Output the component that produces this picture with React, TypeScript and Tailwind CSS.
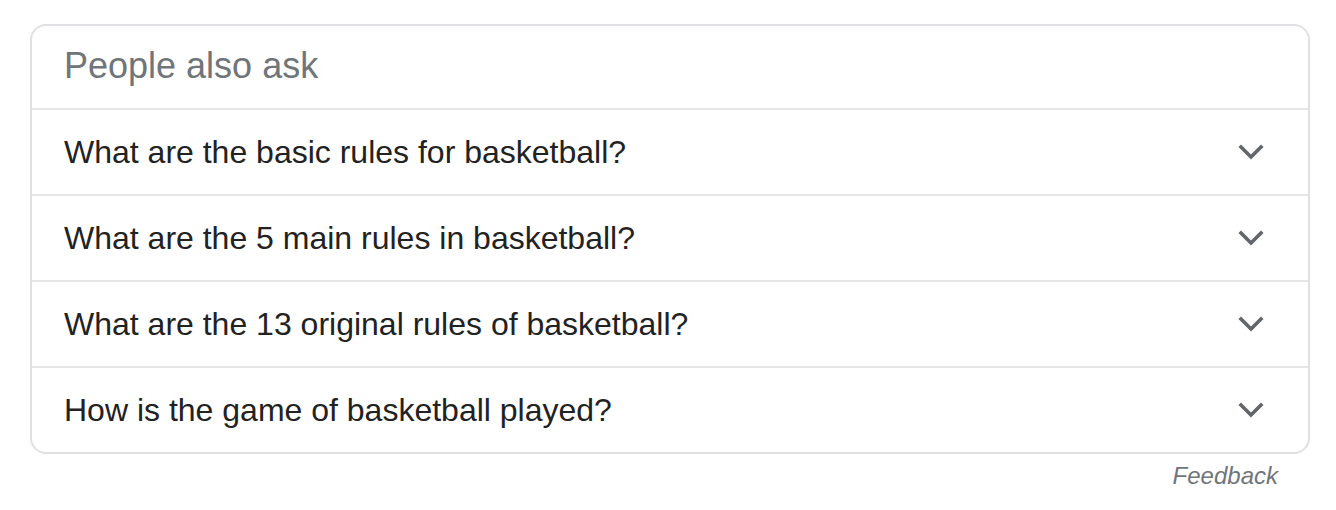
export default function App() {
  const questions = [
    'What are the basic rules for basketball?',
    'What are the 5 main rules in basketball?',
    'What are the 13 original rules of basketball?',
    'How is the game of basketball played?',
  ]

  return (
    <div className="min-h-screen bg-white pt-[24px] pl-[30px] pr-[26px] font-['Liberation_Sans',Arial,sans-serif]">
      <div className="rounded-[16px] border-2 border-[#e0e1e5] overflow-hidden">
        {/* Titre */}
        <div className="h-[82px] flex items-center pl-[32px] pb-[2px] text-[36px] text-[#70757a]">
          People also ask
        </div>

        {/* Questions */}
        {questions.map((q, index) => (
          <div
            key={index}
            className="h-[86px] flex items-center justify-between border-t-2 border-[#e6e6e6] pl-[32px] pr-[44px]"
          >
            <span className="text-[32px] text-[#222222]">{q}</span>
            <svg width="26" height="16" viewBox="0 0 26 16" fill="none" stroke="#63666a" strokeWidth="3.6" strokeLinecap="square">
              <path d="M3 3l10 10 10-10" />
            </svg>
          </div>
        ))}
      </div>

      <div className="flex justify-end pr-[32px] pt-[4px]">
        <span className="text-[24px] italic text-[#70757a]">Feedback</span>
      </div>
    </div>
  )
}
